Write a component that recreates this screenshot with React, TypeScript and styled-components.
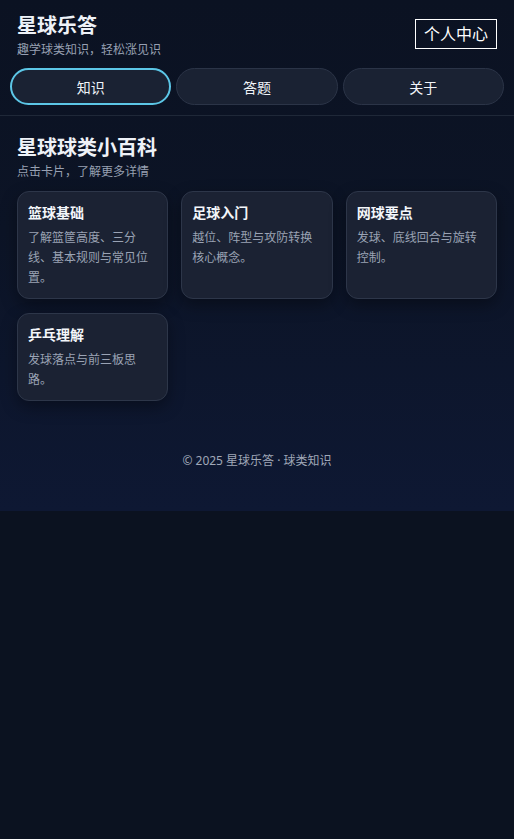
import React from "react";
import styled, { createGlobalStyle } from "styled-components";

const Global = createGlobalStyle`
  html, body { margin: 0; padding: 0; background: #0b1220; }
  body { font-family: "Noto Sans", "Noto Sans CJK SC", sans-serif; color: #e8edf5; }
  * { box-sizing: border-box; }
`;

const Page = styled.div`
  background: linear-gradient(180deg, #0b1222 0%, #0c1426 45%, #0e1833 100%);
`;

const Header = styled.header`
  display: flex;
  justify-content: space-between;
  align-items: center;
  padding: 13px 17px 0 17px;
`;

const Brand = styled.div`
  display: flex;
  flex-direction: column;
`;

const Title = styled.h1`
  margin: 0;
  font-size: 20px;
  line-height: 26px;
  font-weight: 700;
  color: #eef2f8;
`;

const Sub = styled.div`
  margin-top: 2px;
  font-size: 12px;
  line-height: 18px;
  color: #97a0b2;
`;

const ProfileBtn = styled.button`
  font-family: inherit;
  font-size: 16px;
  line-height: 20px;
  color: #ffffff;
  background: transparent;
  border: 1px solid #ffffff;
  padding: 4px 8px;
  margin-top: -4px;
  cursor: pointer;
`;

const Nav = styled.nav`
  display: grid;
  grid-template-columns: repeat(3, 1fr);
  gap: 5px;
  padding: 9px 10px 10px;
  border-bottom: 1px solid #1f2838;
`;

const Tab = styled.button<{ $active?: boolean }>`
  font-family: inherit;
  height: 37px;
  font-size: 14px;
  color: #f1f4f9;
  background: #1a2233;
  border-radius: 999px;
  border: ${(p) => (p.$active ? "2px solid #5cc6e6" : "1px solid #2b3447")};
  cursor: pointer;
`;

const Main = styled.main`
  padding: 19px 17px 0;
`;

const SectionTitle = styled.h2`
  margin: 0;
  font-size: 20px;
  line-height: 26px;
  font-weight: 700;
  color: #eef2f8;
`;

const SectionSub = styled.div`
  font-size: 12px;
  line-height: 18px;
  color: #97a0b2;
  margin-top: 2px;
`;

const Grid = styled.div`
  display: grid;
  grid-template-columns: repeat(3, 1fr);
  column-gap: 13px;
  row-gap: 14px;
  margin-top: 10px;
`;

const Card = styled.div`
  background: #1b2233;
  border: 1px solid #2d3649;
  border-radius: 12px;
  padding: 11px 10px 10px 10px;
  box-shadow: 0 6px 16px rgba(0, 0, 0, 0.35);
  cursor: pointer;
`;

const CardTitle = styled.div`
  font-size: 14px;
  line-height: 20px;
  font-weight: 700;
  color: #f3f6fa;
`;

const CardDesc = styled.div`
  margin-top: 5px;
  font-size: 12px;
  line-height: 20px;
  color: #9aa3b4;
`;

const Footer = styled.footer`
  text-align: center;
  font-size: 12px;
  line-height: 18px;
  color: #a0a8b8;
  padding: 51px 0 41px;
`;

const cards = [
  { t: "篮球基础", d: "了解篮筐高度、三分线、基本规则与常见位置。" },
  { t: "足球入门", d: "越位、阵型与攻防转换核心概念。" },
  { t: "网球要点", d: "发球、底线回合与旋转控制。" },
  { t: "乒乓理解", d: "发球落点与前三板思路。" },
];

export default function App() {
  return (
    <>
      <Global />
      <Page>
        <Header>
          <Brand>
            <Title>星球乐答</Title>
            <Sub>趣学球类知识，轻松涨见识</Sub>
          </Brand>
          <ProfileBtn>个人中心</ProfileBtn>
        </Header>
        <Nav>
          <Tab $active>知识</Tab>
          <Tab>答题</Tab>
          <Tab>关于</Tab>
        </Nav>
        <Main>
          <SectionTitle>星球球类小百科</SectionTitle>
          <SectionSub>点击卡片，了解更多详情</SectionSub>
          <Grid>
            {cards.map((c) => (
              <Card key={c.t}>
                <CardTitle>{c.t}</CardTitle>
                <CardDesc>{c.d}</CardDesc>
              </Card>
            ))}
          </Grid>
        </Main>
        <Footer>© 2025 星球乐答 · 球类知识</Footer>
      </Page>
    </>
  );
}
